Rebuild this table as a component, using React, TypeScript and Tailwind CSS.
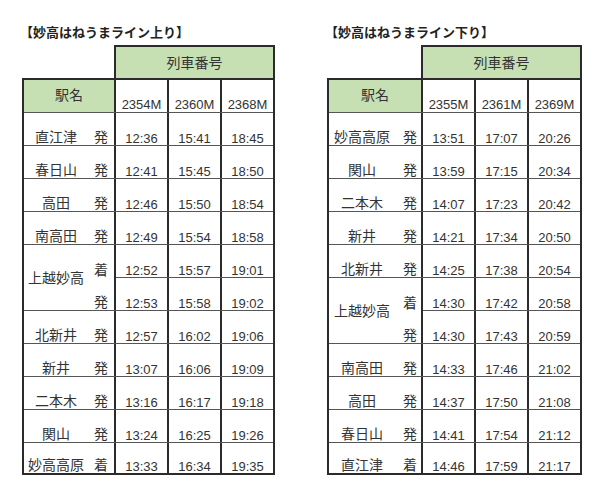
import * as React from "react";

type Stop = [string, string, string, string]; // kind, t1, t2, t3
type Row = { name: string; stops: Stop[] };

const UP: Row[] = [
  { name: "直江津", stops: [["発", "12:36", "15:41", "18:45"]] },
  { name: "春日山", stops: [["発", "12:41", "15:45", "18:50"]] },
  { name: "高田", stops: [["発", "12:46", "15:50", "18:54"]] },
  { name: "南高田", stops: [["発", "12:49", "15:54", "18:58"]] },
  {
    name: "上越妙高",
    stops: [
      ["着", "12:52", "15:57", "19:01"],
      ["発", "12:53", "15:58", "19:02"],
    ],
  },
  { name: "北新井", stops: [["発", "12:57", "16:02", "19:06"]] },
  { name: "新井", stops: [["発", "13:07", "16:06", "19:09"]] },
  { name: "二本木", stops: [["発", "13:16", "16:17", "19:18"]] },
  { name: "関山", stops: [["発", "13:24", "16:25", "19:26"]] },
  { name: "妙高高原", stops: [["着", "13:33", "16:34", "19:35"]] },
];

const DOWN: Row[] = [
  { name: "妙高高原", stops: [["発", "13:51", "17:07", "20:26"]] },
  { name: "関山", stops: [["発", "13:59", "17:15", "20:34"]] },
  { name: "二本木", stops: [["発", "14:07", "17:23", "20:42"]] },
  { name: "新井", stops: [["発", "14:21", "17:34", "20:50"]] },
  { name: "北新井", stops: [["発", "14:25", "17:38", "20:54"]] },
  {
    name: "上越妙高",
    stops: [
      ["着", "14:30", "17:42", "20:58"],
      ["発", "14:30", "17:43", "20:59"],
    ],
  },
  { name: "南高田", stops: [["発", "14:33", "17:46", "21:02"]] },
  { name: "高田", stops: [["発", "14:37", "17:50", "21:08"]] },
  { name: "春日山", stops: [["発", "14:41", "17:54", "21:12"]] },
  { name: "直江津", stops: [["着", "14:46", "17:59", "21:17"]] },
];

// time columns: two fixed with a dark divider, last one fills the rest
const COLS = [
  "w-[53px] border-r-2 border-[#2b2b2b]",
  "w-[53px] border-r-2 border-[#2b2b2b]",
  "flex-1",
];

function Timetable({
  title,
  trains,
  rows,
  width,
  stW,
  headMl,
  kindGap,
  kindPr,
}: {
  title: string;
  trains: string[];
  rows: Row[];
  width: string;
  stW: string;
  headMl: string;
  kindGap: string;
  kindPr: string;
}) {
  return (
    <div className={width}>
      <div className="h-[15px] text-[13px] leading-[15px] font-bold text-[#222] -ml-[2px] whitespace-nowrap">
        {title}
      </div>

      <div className="mt-[5px] flex h-[33px]">
        <div className={headMl} />
        <div className="flex-1 border-2 border-b-0 border-[#2b2b2b] bg-[#c6e0b4] flex items-center justify-center text-[14px] leading-[14px]">
          列車番号
        </div>
      </div>

      <div className="border-2 border-[#2b2b2b]">
        <div className="flex h-[33px] border-b border-[#555]">
          <div
            className={`${stW} border-r-2 border-[#2b2b2b] bg-[#c6e0b4] flex items-center justify-center text-[14px] leading-[14px] pb-[2px]`}
          >
            駅名
          </div>
          {trains.map((t, i) => (
            <div
              key={t}
              className={`${COLS[i]} flex items-end justify-center text-[13px] leading-[13px] pb-[1px]`}
            >
              {t}
            </div>
          ))}
        </div>

        {rows.map((r, ri) => {
          const last = ri === rows.length - 1;
          const rowH = last ? "h-[30px]" : "h-[33px] border-b border-[#555]";
          if (r.stops.length === 1) {
            const [kind, ...times] = r.stops[0];
            return (
              <div key={r.name} className={`flex ${rowH}`}>
                <div
                  className={`${stW} border-r-2 border-[#2b2b2b] flex items-end text-[14px] leading-[14px] pb-[1px] ${kindPr}`}
                >
                  <div className="flex-1 text-center whitespace-nowrap">
                    {r.name}
                  </div>
                  <div className={`w-[14px] ${kindGap}`}>{kind}</div>
                </div>
                {times.map((t, i) => (
                  <div
                    key={i}
                    className={`${COLS[i]} flex items-end justify-center text-[13px] leading-[13px]`}
                  >
                    {t}
                  </div>
                ))}
              </div>
            );
          }
          return (
            <div key={r.name} className="flex h-[66px] border-b border-[#555]">
              <div
                className={`${stW} border-r-2 border-[#2b2b2b] flex text-[14px] leading-[14px] ${kindPr}`}
              >
                <div className="flex-1 flex items-center justify-center whitespace-nowrap">
                  {r.name}
                </div>
                <div className={`w-[14px] ${kindGap} flex flex-col`}>
                  {r.stops.map((s) => (
                    <div key={s[0]} className="h-[33px] flex items-end pb-[1px]">
                      {s[0]}
                    </div>
                  ))}
                </div>
              </div>
              <div className="flex-1 flex flex-col">
                {r.stops.map((s, si) => (
                  <div
                    key={si}
                    className={`flex h-[33px] ${si === 0 ? "border-b border-[#555]" : ""}`}
                  >
                    {s.slice(1).map((t, i) => (
                      <div
                        key={i}
                        className={`${COLS[i]} flex items-end justify-center text-[13px] leading-[13px]`}
                      >
                        {t}
                      </div>
                    ))}
                  </div>
                ))}
              </div>
            </div>
          );
        })}
      </div>
    </div>
  );
}

export default function App() {
  return (
    <div className="w-[600px] h-[488px] bg-white text-[#333] font-['Liberation_Sans','Noto_Sans_CJK_JP',sans-serif] flex pl-[22px] pt-[25px] gap-[52px]">
      <Timetable
        title="【妙高はねうまライン上り】"
        trains={["2354M", "2360M", "2368M"]}
        rows={UP}
        width="w-[253px]"
        stW="w-[92px]"
        headMl="w-[92px]"
        kindGap="ml-[6px]"
        kindPr="pr-[6px]"
      />
      <Timetable
        title="【妙高はねうまライン下り】"
        trains={["2355M", "2361M", "2369M"]}
        rows={DOWN}
        width="w-[255px]"
        stW="w-[94px]"
        headMl="w-[94px]"
        kindGap="ml-[8px]"
        kindPr="pr-[4px]"
      />
    </div>
  );
}
